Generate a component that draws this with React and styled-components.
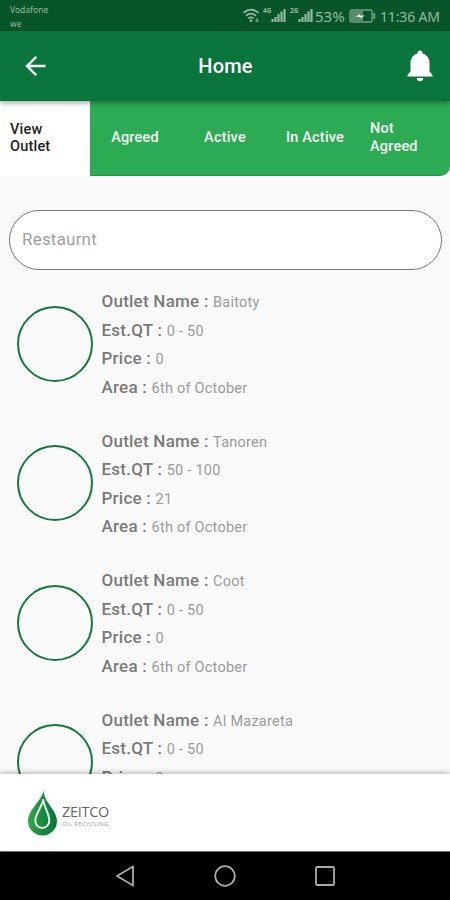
import React from "react";
import styled, { createGlobalStyle } from "styled-components";

const GlobalStyle = createGlobalStyle`
  * {
    box-sizing: border-box;
  }

  body {
    margin: 0;
    background: #fafafa;
    font-family: Roboto, "Liberation Sans", sans-serif;
  }
`;

const Screen = styled.div`
  width: 450px;
  height: 900px;
  display: flex;
  flex-direction: column;
  overflow: hidden;
  background: #fafafa;
`;

const StatusBar = styled.div`
  flex: none;
  height: 31px;
  padding: 0 10px;
  display: flex;
  justify-content: space-between;
  background: #09552a;
  color: #94b9a1;
`;

const Carrier = styled.div`
  padding-top: 3px;
  font: 8.5px/14px "Noto Sans", sans-serif;
`;

const StatusIcons = styled.div`
  display: flex;
  align-items: center;
  height: 32px;
  font: 15px "Noto Sans", sans-serif;
  white-space: nowrap;
`;

const Percent = styled.span`
  width: 34px;
`;

const Clock = styled.span`
  width: 60px;
  margin-left: 4px;
  font-size: 14px;
  letter-spacing: -0.15px;
`;

const AppBar = styled.header`
  flex: none;
  position: relative;
  z-index: 1;
  height: 70px;
  padding: 0 17px 0 25px;
  display: flex;
  align-items: center;
  justify-content: space-between;
  background: #09743b;
  box-shadow: 0 2px 5px rgba(0, 0, 0, 0.35);
`;

const Title = styled.h1`
  margin: 0 3px 0 0;
  color: #fff;
  font-size: 20px;
  font-weight: 500;
  letter-spacing: 0.2px;
`;

const Tabs = styled.nav`
  flex: none;
  height: 75px;
  display: flex;
  border-bottom: 1px solid #1c9444;
  border-bottom-right-radius: 10px;
  background: #2cab54;
`;

const Tab = styled.div`
  flex: 1;
  display: flex;
  align-items: center;
  justify-content: center;
  padding: 0 10px 1px;
  margin-bottom: ${(props) => (props.$active ? "-1px" : "0")};
  background: ${(props) => (props.$active ? "#fff" : "transparent")};
  color: ${(props) => (props.$active ? "#222" : "#f4fff6")};
  font-size: 14.5px;
  font-weight: 500;
  letter-spacing: 0.2px;
  line-height: 17.5px;
`;

const Content = styled.main`
  flex: 1;
  min-height: 0;
  overflow: hidden;
  padding: 34px 8px 0 9px;
`;

const SearchField = styled.div`
  height: 60px;
  padding: 0 12px 2px;
  display: flex;
  align-items: center;
  border: 1px solid #777;
  border-radius: 30px;
  background: #fff;
  color: #a0a0a0;
  font-size: 17px;
  letter-spacing: 0.2px;
`;

const OutletList = styled.div`
  display: flex;
  flex-direction: column;
  gap: 25.2px;
  padding: 17px 0 0 8px;
`;

const OutletRow = styled.div`
  display: flex;
  gap: 8.5px;
`;

const Avatar = styled.div`
  flex: none;
  width: 76px;
  height: 76px;
  margin-top: 18.5px;
  border: 2px solid #137a3c;
  border-radius: 50%;
`;

const Line = styled.div`
  height: 28.6px;
  color: #7a7a7a;
  font-size: 17px;
  font-weight: 500;
  line-height: 28.6px;
  letter-spacing: 0.24px;
  white-space: nowrap;
`;

const Value = styled.span`
  color: #9b9b9b;
  font-size: 14.5px;
  font-weight: 400;
`;

const Footer = styled.footer`
  flex: none;
  position: relative;
  z-index: 1;
  height: 77px;
  display: flex;
  align-items: center;
  gap: 5px;
  padding: 1px 0 0 28px;
  background: #fff;
  box-shadow: 0 -1px 6px rgba(0, 0, 0, 0.3);
`;

const Brand = styled.div`
  padding-top: 6px;
  color: #666;
  font-family: "Open Sans", sans-serif;
`;

const BrandName = styled.div`
  font-size: 14.5px;
  line-height: 17px;
  letter-spacing: -0.3px;
`;

const BrandTag = styled.div`
  font-size: 6px;
  line-height: 9px;
  letter-spacing: 0.3px;
  color: #999;
  white-space: nowrap;
`;

const NavBar = styled.div`
  flex: none;
  height: 49px;
  padding: 0 115px;
  display: flex;
  align-items: center;
  justify-content: space-between;
  border-top: 1px solid #777;
  background: #000;
`;

const tabs = ["View Outlet", "Agreed", "Active", "In Active", "Not Agreed"];

const outlets = [
  { name: "Baitoty", quantity: "0 - 50", price: 0, area: "6th of October" },
  { name: "Tanoren", quantity: "50 - 100", price: 21, area: "6th of October" },
  { name: "Coot", quantity: "0 - 50", price: 0, area: "6th of October" },
  { name: "Al Mazareta", quantity: "0 - 50", price: 0, area: "6th of October" },
];

const SignalIcons = () => (
  <svg width="73" height="20" viewBox="0 0 73 20" fill="none" stroke="#94b9a1">
    <path d="M1.500 6.800Q9 0.500 16.500 6.800M4 9.800Q9 5.500 14 9.800M6.500 12.500Q9 10.300 11.500 12.500" strokeWidth="1.8" />
    <circle cx="9" cy="14.700" r="1.300" fill="#94b9a1" stroke="none" />
    <path d="M15 12V16M13.500 14.500L15 16L16.500 14.500" strokeWidth="1" />
    <g fill="#94b9a1" stroke="none" fontFamily="Noto Sans" fontSize="6.500" fontWeight="700">
      <text x="21" y="7">4G</text>
      <text x="48" y="7">2G</text>
    </g>
    <path d="M30.500 13V16M33.500 11V16M36.500 8V16M39.500 5.500V16M42.500 3V16" strokeWidth="2.200" />
    <path d="M57.500 13V16M60.500 11V16M63.500 8V16M66.500 5.500V16M69.500 3V16" strokeWidth="2.200" />
  </svg>
);

const BatteryIcon = () => (
  <svg width="27" height="14" viewBox="0 0 27 14">
    <rect x="1" y="1" width="22" height="12" rx="1.500" fill="none" stroke="#729d80" strokeWidth="1.400" />
    <rect x="2" y="2" width="12" height="10" fill="#5b8d6c" />
    <rect x="24.200" y="4" width="2" height="6" fill="#729d80" />
    <path d="M6.500 7.500L11 5V6.400H16L11.500 9.500V8.200Z" fill="#d7eadc" />
  </svg>
);

const BackArrow = () => (
  <svg width="22" height="22" viewBox="0 0 22 22" fill="none" stroke="#f2fff5" strokeWidth="2.500">
    <path d="M20.500 11H2.500M11.200 1.800L2 11L11.200 20.200" />
  </svg>
);

const BellIcon = () => (
  <svg width="26" height="32" viewBox="0 0 26 32" fill="#fff">
    <path d="M10.500 3.500V3a2.500 2.500 0 0 1 5 0v.500C20 4.700 22.500 8.500 22.500 13v8.500l3 3.500v1.500H.500V25l3-3.500V13C3.500 8.500 6 4.700 10.500 3.500Z" />
    <path d="M9.800 28h6.400a3.200 3.200 0 0 1-6.400 0Z" />
  </svg>
);

const DropLogo = () => (
  <svg width="29" height="46" viewBox="0 0 29 46">
    <defs>
      <linearGradient id="drop" x1="0" y1="0" x2="1" y2="0">
        <stop offset="0" stopColor="#38a747" />
        <stop offset="0.500" stopColor="#168b40" />
        <stop offset="1" stopColor="#08753b" />
      </linearGradient>
    </defs>
    <path d="M15.500 0C15 10 0 19 0 31a14.500 14.500 0 0 0 29 0C29 20 15.500 12 15.500 0Z" fill="url(#drop)" />
    <path d="M15.200 9C14.500 17 7.300 23 7.300 31a7 7 0 0 0 14 0C21.300 23 15.700 17 15.200 9Z" fill="none" stroke="#eefbea" strokeWidth="1.900" />
  </svg>
);

const Outlet = ({ outlet }) => (
  <OutletRow>
    <Avatar />
    <div>
      <Line>Outlet Name : <Value>{outlet.name}</Value></Line>
      <Line>Est.QT : <Value>{outlet.quantity}</Value></Line>
      <Line>Price : <Value>{outlet.price}</Value></Line>
      <Line>Area : <Value>{outlet.area}</Value></Line>
    </div>
  </OutletRow>
);

const App = () => {
  return (
    <>
      <GlobalStyle />
      <Screen>
        <StatusBar>
          <Carrier>
            <div>Vodafone</div>
            <div>we</div>
          </Carrier>
          <StatusIcons>
            <SignalIcons />
            <Percent>53%</Percent>
            <BatteryIcon />
            <Clock>11:36 AM</Clock>
          </StatusIcons>
        </StatusBar>

        <AppBar>
          <BackArrow />
          <Title>Home</Title>
          <BellIcon />
        </AppBar>

        <Tabs>
          {tabs.map((tab, index) => (
            <Tab key={tab} $active={index === 0}>{tab}</Tab>
          ))}
        </Tabs>

        <Content>
          <SearchField>Restaurnt</SearchField>
          <OutletList>
            {outlets.map((outlet) => (
              <Outlet key={outlet.name} outlet={outlet} />
            ))}
          </OutletList>
        </Content>

        <Footer>
          <DropLogo />
          <Brand>
            <BrandName>ZEITCO</BrandName>
            <BrandTag>OIL RECYCLING</BrandTag>
          </Brand>
        </Footer>

        <NavBar>
          <svg width="20" height="22" viewBox="0 0 20 22" fill="none" stroke="#aaa" strokeWidth="1.800" strokeLinejoin="round">
            <path d="M2 11L18 1.500V20.500Z" />
          </svg>
          <svg width="22" height="22" viewBox="0 0 22 22" fill="none" stroke="#aaa" strokeWidth="1.800">
            <circle cx="11" cy="11" r="9.800" />
          </svg>
          <svg width="20" height="20" viewBox="0 0 20 20" fill="none" stroke="#aaa" strokeWidth="1.800">
            <rect x="1" y="1" width="18" height="18" rx="1" />
          </svg>
        </NavBar>
      </Screen>
    </>
  );
};

export default App;
